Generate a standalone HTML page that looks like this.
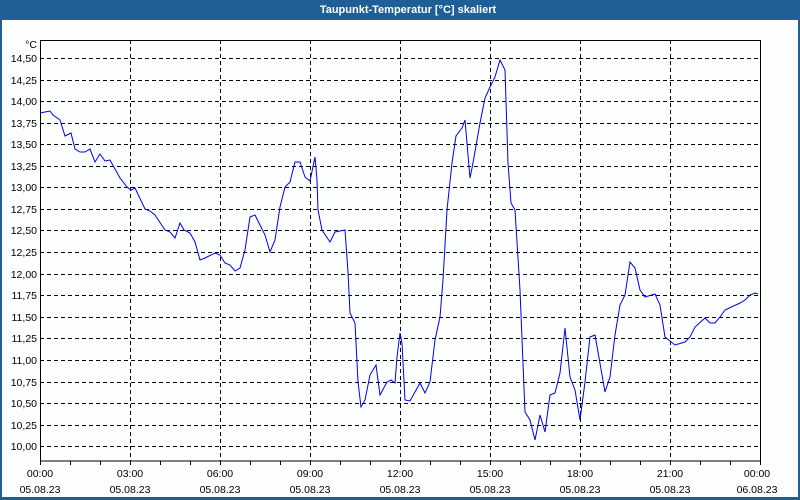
<!DOCTYPE html>
<html><head><meta charset="utf-8"><style>
html,body{margin:0;padding:0;width:800px;height:500px;overflow:hidden;background:#fff}
svg{display:block}
text{font-family:"Liberation Sans","DejaVu Sans",sans-serif;font-size:10.5px;fill:#000}
</style></head><body>
<svg width="800" height="500" viewBox="0 0 800 500" xmlns="http://www.w3.org/2000/svg">
<rect x="0" y="0" width="800" height="500" fill="#1f5f97"/>
<rect x="2" y="20" width="796" height="477" fill="#fdfefe"/>
<text x="408" y="13" text-anchor="middle" style="font-weight:bold;fill:#fff;font-size:11px">Taupunkt-Temperatur [°C] skaliert</text>
<g stroke="#000" stroke-width="1" stroke-dasharray="4,3" shape-rendering="crispEdges">
<path d="M40 58.5H760M40 80.5H760M40 101.5H760M40 123.5H760M40 144.5H760M40 166.5H760M40 187.5H760M40 209.5H760M40 230.5H760M40 252.5H760M40 274.5H760M40 295.5H760M40 317.5H760M40 338.5H760M40 360.5H760M40 382.5H760M40 403.5H760M40 425.5H760M40 446.5H760"/>
<path d="M130.5 40V461M220.5 40V461M310.5 40V461M400.5 40V461M490.5 40V461M580.5 40V461M670.5 40V461"/>
</g>
<g stroke="#000" stroke-width="1" fill="none" shape-rendering="crispEdges">
<rect x="40.5" y="40.5" width="720" height="420.5"/>
<path d="M70.5 461V465M100.5 461V465M130.5 461V465M160.5 461V465M190.5 461V465M220.5 461V465M250.5 461V465M280.5 461V465M310.5 461V465M340.5 461V465M370.5 461V465M400.5 461V465M430.5 461V465M460.5 461V465M490.5 461V465M520.5 461V465M550.5 461V465M580.5 461V465M610.5 461V465M640.5 461V465M670.5 461V465M700.5 461V465M730.5 461V465M760.5 461V465M40.5 461V465"/>
</g>
<polyline fill="none" stroke="#0000ee" stroke-width="1" points="40,113 50,111 53,115 60,120 65,136 71,133 75,149 80,152 85,152 90,149 95,162 100,154 105,161 110,160 120,178 127,187 131,190 135,188 145,209 150,211 155,215 165,230 170,232 175,238 180,223 184,230 190,233 195,242 200,260 205,258 215,253 220,255 225,263 230,265 235,271 240,268 245,250 250,217 255,215 260,225 265,235 270,252 275,240 280,207 285,187 290,182 295,162 300,162 305,177 310,181 315,157 317,180 318,210 322,230 330,242 335,232 345,230 348,272 350,313 355,323 358,382 361,407 365,400 370,375 376,365 380,395 387,382 391,380 395,383 397,357 400,333 402,343 405,400 410,401 420,383 425,393 430,382 435,340 440,317 443,280 447,210 452,163 456,136 462,128 465,120 470,178 473,163 480,123 485,98 490,87 495,77 500,60 505,70 508,163 511,203 515,210 520,290 525,412 530,420 535,440 540,415 545,432 550,395 555,393 560,373 565,328 570,377 575,390 580,420 585,382 590,337 595,335 605,392 610,377 615,335 620,305 625,295 630,262 635,268 640,290 645,297 655,294 660,305 665,337 675,345 685,342 690,337 695,327 705,318 710,323 715,323 720,317 725,310 740,303 745,300 750,295 755,293 758,294"/>
<g text-anchor="end">
<text x="37" y="48">°C</text>
<text x="37" y="62">14,50</text><text x="37" y="84">14,25</text><text x="37" y="105">14,00</text><text x="37" y="127">13,75</text><text x="37" y="148">13,50</text><text x="37" y="170">13,25</text><text x="37" y="191">13,00</text><text x="37" y="213">12,75</text><text x="37" y="234">12,50</text><text x="37" y="256">12,25</text><text x="37" y="278">12,00</text><text x="37" y="299">11,75</text><text x="37" y="321">11,50</text><text x="37" y="342">11,25</text><text x="37" y="364">11,00</text><text x="37" y="386">10,75</text><text x="37" y="407">10,50</text><text x="37" y="429">10,25</text><text x="37" y="450">10,00</text>
</g>
<g text-anchor="middle">
<text x="40" y="477">00:00</text><text x="40" y="493">05.08.23</text>
<text x="130" y="477">03:00</text><text x="130" y="493">05.08.23</text>
<text x="220" y="477">06:00</text><text x="220" y="493">05.08.23</text>
<text x="310" y="477">09:00</text><text x="310" y="493">05.08.23</text>
<text x="400" y="477">12:00</text><text x="400" y="493">05.08.23</text>
<text x="490" y="477">15:00</text><text x="490" y="493">05.08.23</text>
<text x="580" y="477">18:00</text><text x="580" y="493">05.08.23</text>
<text x="670" y="477">21:00</text><text x="670" y="493">05.08.23</text>
<text x="757" y="477">00:00</text><text x="757" y="493">06.08.23</text>
</g>
</svg>
</body></html>
